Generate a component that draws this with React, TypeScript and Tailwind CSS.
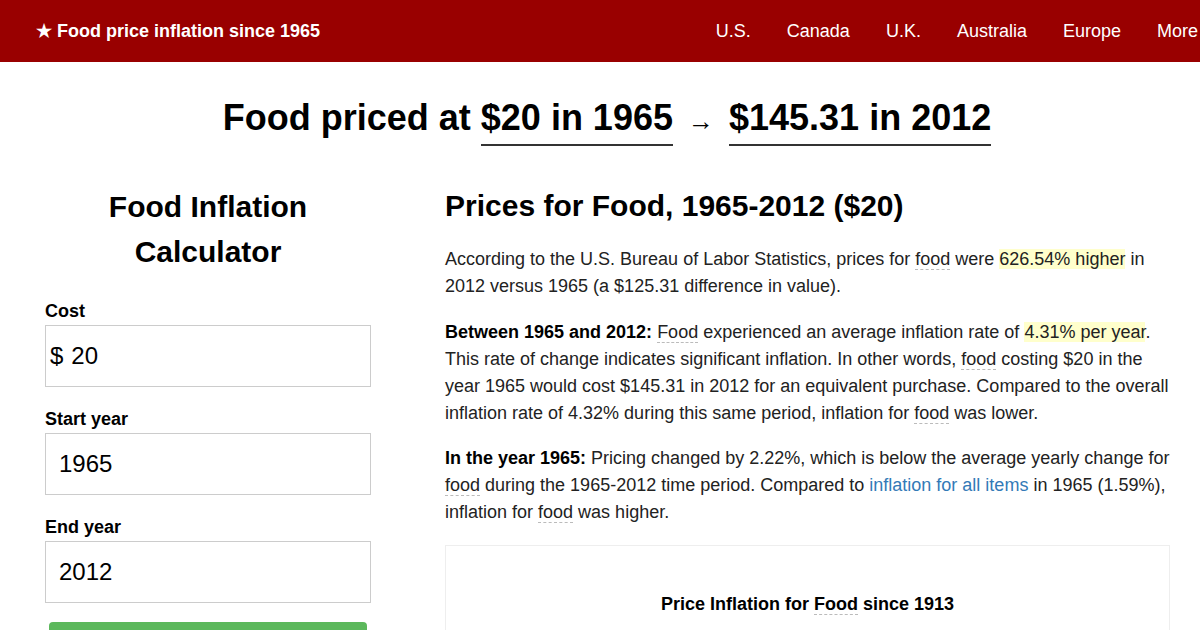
import React from "react";

function Term({ children }: { children: React.ReactNode }) {
  return <span className="border-b border-dashed border-[#bbb]">{children}</span>;
}

function Field({ label, value, prefix }: { label: string; value: string; prefix?: boolean }) {
  return (
    <div className="mt-[18px]">
      <div className="text-[18px] font-bold leading-[28px] text-black">{label}</div>
      <div className="flex h-[62px] items-center border border-[#ccc] bg-white text-[24px] text-black">
        {prefix ? <span className="pl-[4px] pr-[8px]">$</span> : <span className="pl-[13px]" />}
        <span>{value}</span>
      </div>
    </div>
  );
}

export default function App() {
  return (
    <div className="h-[630px] w-[1200px] overflow-hidden bg-white" style={{ fontFamily: '"Liberation Sans", Arial, sans-serif' }}>
      <header className="flex h-[62px] items-center justify-between bg-[#990000] pl-[36px] text-white">
        <div className="text-[18px] font-bold">★ Food price inflation since 1965</div>
        <nav className="mr-[2px] flex gap-[36px] text-[18px] whitespace-nowrap">
          <span>U.S.</span>
          <span>Canada</span>
          <span>U.K.</span>
          <span>Australia</span>
          <span>Europe</span>
          <span>More</span>
        </nav>
      </header>

      <h1 className="mt-[32px] pl-[14px] text-center text-[36px] font-bold leading-[48px] text-black">
        Food priced at{" "}
        <span className="inline-block border-b-2 border-[#333] pb-[2px]">$20 in 1965</span>{" "}
        <span className="mx-[5px] text-[26px]">→</span>{" "}
        <span className="inline-block border-b-2 border-[#333] pb-[2px]">$145.31 in 2012</span>
      </h1>

      <div className="mt-[30px] flex">
        <div className="ml-[45px] w-[326px] shrink-0 pt-[8px]">
          <h2 className="text-center text-[30px] font-bold leading-[45px] text-black">
            Food Inflation
            <br />
            Calculator
          </h2>
          <div className="mt-[23px]">
            <Field label="Cost" value="20" prefix />
            <Field label="Start year" value="1965" />
            <Field label="End year" value="2012" />
            <div className="mx-[4px] mt-[19px] h-[40px] rounded-[4px] bg-[#5cb85c]" />
          </div>
        </div>

        <div className="ml-[74px] w-[728px] shrink-0 pt-[10px] text-[18px] leading-[27px] text-[#222]">
          <h2 className="text-[30px] font-bold leading-[40px] text-black">Prices for Food, 1965-2012 ($20)</h2>
          <p className="mt-[20px]">
            According to the U.S. Bureau of Labor Statistics, prices for <Term>food</Term> were{" "}
            <span className="bg-[#ffffcc]">626.54% higher</span> in 2012 versus 1965 (a $125.31 difference in value).
          </p>
          <p className="mt-[19px]">
            <b className="text-black">Between 1965 and 2012:</b> <Term>Food</Term> experienced an average inflation rate of{" "}
            <span className="bg-[#ffffcc]">4.31% per year</span>. This rate of change indicates significant inflation. In other
            words, <Term>food</Term> costing $20 in the year 1965 would cost $145.31 in 2012 for an equivalent purchase. Compared
            to the overall inflation rate of 4.32% during this same period, inflation for <Term>food</Term> was lower.
          </p>
          <p className="mt-[18px]">
            <b className="text-black">In the year 1965:</b> Pricing changed by 2.22%, which is below the average yearly change for{" "}
            <Term>food</Term> during the 1965-2012 time period. Compared to{" "}
            <span className="text-[#337ab7]">inflation for all items</span> in 1965 (1.59%), inflation for <Term>food</Term> was
            higher.
          </p>
          <div className="mt-[19px] h-[120px] w-[725px] border border-[#eee] pt-[45px] text-center">
            <div className="font-bold text-black">
              Price Inflation for <Term>Food</Term> since 1913
            </div>
          </div>
        </div>
      </div>
    </div>
  );
}
